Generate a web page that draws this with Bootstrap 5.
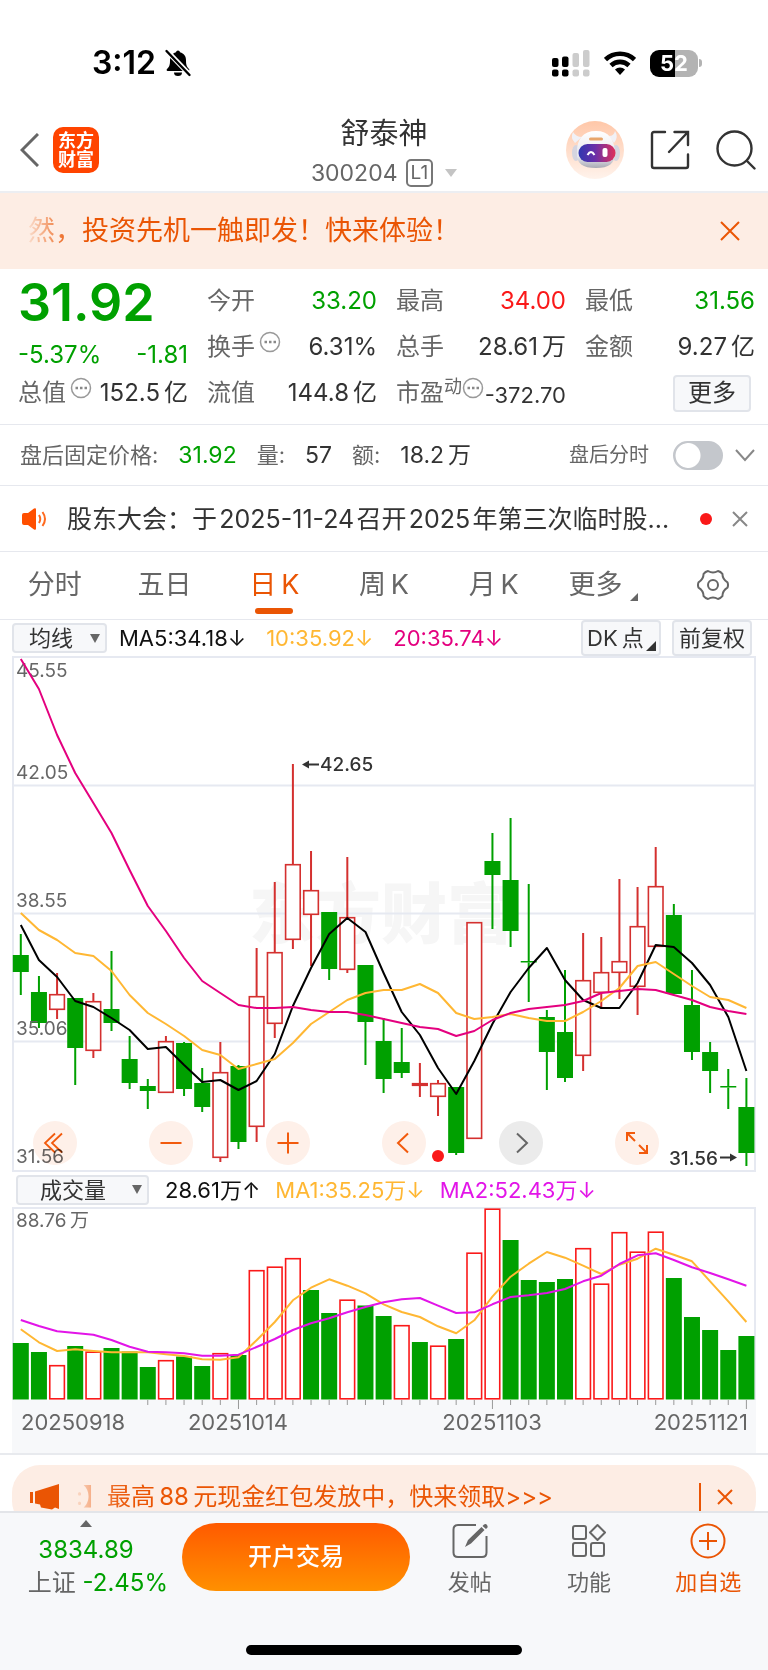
<!DOCTYPE html>
<html lang="zh-CN">
<head>
<meta charset="utf-8">
<meta name="viewport" content="width=device-width, initial-scale=1">
<title>舒泰神 300204</title>
<link rel="stylesheet" href="https://cdn.jsdelivr.net/npm/bootstrap@5.3.0/dist/css/bootstrap.min.css">
<style>
:root{--up:#fa1919;--down:#00a000;--brand:#ea5504;--ink:#333;--soft:#666;--line:#e6e8ee;--panel:#f7f8fa;--peach:#fdede4}
body{font-family:Inter,"Noto Sans CJK SC",sans-serif;color:var(--ink);background:#fff;font-size:24px;line-height:32px}
button{font:inherit;color:inherit;background:none;border:0;padding:0}
svg{display:block}
a{color:inherit;text-decoration:none}
.t-up{color:var(--up)}.t-down{color:var(--down)}.t-soft{color:var(--soft)}.t-brand{color:var(--brand)}
.unit{margin-left:4px}

.statusbar{padding:45px 66px 24px 92px;line-height:36px;color:#000}
.clock{font-size:32px;font-weight:600}
.status-icons{gap:14px}
.batt{width:48px;height:27px;border-radius:9px;background:linear-gradient(90deg,#000 52%,#b3b3b3 52%);color:#fff;font-size:22px;line-height:27px;font-weight:700;text-align:center}
.nub{width:3px;height:8px;border-radius:0 3px 3px 0;background:#b3b3b3;margin-left:1px}

.topbar{display:grid;grid-template-columns:1fr auto 1fr;height:88px;padding:3px 12px 0;border-bottom:2px solid #eceef2}
.lead-l{gap:14px;padding-left:8px}
.tools-r{gap:26px}
.logo{width:46px;height:46px;border-radius:10px;background:#ff4400;color:#fff;font-size:18px;line-height:19px;font-weight:700;text-align:center;padding-top:4px}
.stockname{font-size:29px;line-height:36px;font-weight:400;margin:0}
.namebox{gap:6px;padding-top:4px}
.code{font-size:23px;line-height:30px}
.lvl{border:2px solid #777;border-radius:5px;font-size:19px;line-height:24px;padding:0 3px}
.tri-d{border:6px solid transparent;border-top:8px solid #c4c4c4;border-bottom:0}
.tri-u{border:6px solid transparent;border-bottom:7px solid #666;border-top:0}

.banner{height:76px;background:var(--peach);font-size:27px;color:var(--brand);padding:0 28px}
.fade-l{-webkit-mask-image:linear-gradient(90deg,rgba(0,0,0,.1),rgba(0,0,0,.9) 40px,#000 60px);mask-image:linear-gradient(90deg,rgba(0,0,0,.1),rgba(0,0,0,.9) 40px,#000 60px)}

.quote{display:grid;grid-template-columns:repeat(4,1fr);grid-auto-rows:46px;column-gap:19px;padding:9px 13px 8px 18px;border-bottom:1px solid var(--line)}
.quote>div{display:flex;align-items:center;justify-content:space-between;white-space:nowrap}
.quote>.price{font-size:52px;font-weight:600;padding-top:4px}
.pe{font-size:22px}
.dyn{font-size:18px;line-height:20px;align-self:flex-start}
.btn-box{background:var(--panel);border:2px solid #e1e4ea;border-radius:4px;color:var(--ink)}
.more{width:78px;height:37px;line-height:32px;margin-right:4px}

.after{height:61px;padding:0 13px 0 20px;font-size:23px;border-bottom:1px solid var(--line)}
.after .gap-k{margin-left:20px}
.after .lbl{font-size:22px}
.after .form-switch{padding:0;margin:0;min-height:0;line-height:0}
.after .form-check-input{width:50px;height:29px;margin:0;float:none;border:2px solid #c4c7cc;background-color:#c4c7cc;background-image:radial-gradient(circle at 13px 50%,#fff 12px,transparent 13px);background-size:100% 100%;background-position:0 0}
.lbl-sm{font-size:20px}

.notice{height:66px;padding:0 20px 0 21px;font-size:25px;border-bottom:1px solid var(--line)}
.dot{width:12px;height:12px;border-radius:50%;background:var(--up)}

.periods{display:grid;grid-template-columns:repeat(7,1fr);height:68px;font-size:27px;color:var(--soft);border-bottom:1px solid var(--line);text-align:center}
.periods a,.periods button{position:relative;display:flex;align-items:center;justify-content:center;height:66px}
.periods .active{color:var(--brand)}
.periods .active::after{content:"";position:absolute;bottom:4px;left:50%;width:38px;height:6px;margin-left:-19px;border-radius:3px;background:var(--brand)}
.corner{border:4px solid transparent;border-right-color:currentColor;border-bottom-color:currentColor}

.indbar{font-size:22px;line-height:30px;color:#111;white-space:nowrap;padding:0 16px 0 12px}
.indbar .c-or,.indbar .c-pk{margin-left:20px}
.indbar-vol{height:35px;padding:0 0 0 4px}
.indbar-vol .c-or,.indbar-vol .c-mg{margin-left:15px}
.pick{appearance:none;-webkit-appearance:none;background:var(--panel) url("data:image/svg+xml,%3Csvg xmlns='http://www.w3.org/2000/svg' width='10' height='9'%3E%3Cpath fill='%23666' d='M0 0h10L5 9z'/%3E%3C/svg%3E") no-repeat right 5px center;border:2px solid #e1e4ea;border-radius:4px;font-size:22px;height:30px;line-height:26px;padding:0 0 0 15px;color:var(--ink)}
.pick-ma{width:95px}
.pick-vol{width:133px;padding-left:22px}
.tagbtn{width:80px;height:36px;line-height:32px;position:relative}
.tagbtn+.tagbtn{margin-left:11px}
.tagbtn .corner{position:absolute;right:3px;bottom:3px;border-width:5px}
.c-or{color:#ffb733}.c-pk{color:#e4007f}.c-mg{color:#e215e8}

.plots{padding:0 12px}
.plots svg{width:100%;height:auto}
.plots text{font-size:19px;fill:#666}
.plots .extreme{fill:#333;font-weight:500}
.plots .dates text{font-size:22px}
.plots .wm{font-size:66px;font-weight:900;fill:#f6f6f6}
.tools{position:absolute;left:21px;right:97px;bottom:7px;display:flex;justify-content:space-between;mix-blend-mode:multiply}
.tools button{width:44px;height:44px;border-radius:50%;background:#fef0e9;color:#f25a0c}
.tools .off{background:#ebebeb;color:#666}

.promo{height:58px;border-top:2px solid #e8eaee;padding:10px 12px 0;overflow:hidden}
.pill{height:64px;border-radius:28px;background:var(--peach);color:var(--brand);padding:0 23px 0 18px}
.pill .sep{width:2px;height:29px;background:var(--brand)}

.dock{background:var(--panel);border-top:2px solid #e3e5e9}
.dockrow{display:grid;grid-template-columns:182px 228px 1fr 1fr 1fr;height:84px;padding-top:5px}
.idx{padding:2px 14px 0 4px}
.idx .tri-u{margin-bottom:7px}
.idx .ix-row{line-height:34px}
.trade{height:68px;margin-top:5px;border-radius:34px;background:linear-gradient(#ff5a00,#ff9000);color:#fff;font-weight:500}
.act{display:flex;flex-direction:column;align-items:center;font-size:22px;line-height:30px;color:#666;padding-top:5px}
.act.t-brand{color:var(--brand)}
.act svg{margin-bottom:8px}
.homebar{width:276px;height:10px;border-radius:5px;background:#000;margin:48px auto 15px}
</style>
</head>
<body>

<div class="statusbar d-flex align-items-center">
  <span class="clock">3:12</span>
  <svg class="ms-2" width="28" height="28" viewBox="0 0 28 28"><path fill="#000" d="M14 1.500a2 2 0 0 1 2 1.800c4 1 6 4.200 6 8.200 0 5 1 6.500 3 8.500.6.600.5 2-.7 2H3.700c-1.200 0-1.300-1.400-.7-2 2-2 3-3.500 3-8.500 0-4 2-7.200 6-8.200a2 2 0 0 1 2-1.800zM10 23.500h8a4 3.600 0 0 1-8 0z"/><path stroke="#fff" stroke-width="5" d="M2 1l24 25"/><path stroke="#000" stroke-width="2.400" stroke-linecap="round" d="M2.500 2l23 24"/></svg>
  <div class="ms-auto d-flex align-items-center status-icons">
    <svg width="38" height="28" viewBox="0 0 38 28"><g fill="#000"><rect x="0" y="9" width="6.500" height="9" rx="2"/><rect x="10" y="7.500" width="6.500" height="10.500" rx="2"/><rect x="0" y="20.500" width="6.500" height="7" rx="2"/><rect x="10" y="20.500" width="6.500" height="7" rx="2"/></g><g fill="#ccc"><rect x="20.500" y="4" width="6.500" height="14" rx="2"/><rect x="31" y="1" width="6.500" height="17" rx="2"/><rect x="20.500" y="20.500" width="6.500" height="7" rx="2"/><rect x="31" y="20.500" width="6.500" height="7" rx="2"/></g></svg>
    <svg width="32" height="26" viewBox="0 0 32 26"><g fill="none" stroke="#000" stroke-width="4.600"><path d="M1.500 9.500a21 21 0 0 1 29 0"/><path d="M7 15.500a13 13 0 0 1 18 0"/></g><path fill="#000" d="M16 25l-5-5.500a7.500 7.500 0 0 1 10 0z"/></svg>
    <div class="d-flex align-items-center"><div class="batt">52</div><div class="nub"></div></div>
  </div>
</div>

<header class="topbar">
  <div class="lead-l d-flex align-items-center">
    <button type="button" aria-label="返回"><svg width="19" height="34" viewBox="0 0 19 34" fill="none" stroke="#666" stroke-width="3"><path d="M18 1L2 17l16 16"/></svg></button>
    <a href="#" class="logo">东方<br>财富</a>
  </div>
  <div class="namebox d-flex flex-column align-items-center justify-content-center">
    <h1 class="stockname">舒泰神</h1>
    <div class="code t-soft d-flex align-items-center gap-2"><span>300204</span><span class="lvl">L1</span><span class="tri-d ms-1"></span></div>
  </div>
  <div class="tools-r d-flex align-items-center justify-content-end">
    <button type="button" aria-label="智能助手"><svg width="58" height="58" viewBox="0 0 58 58"><defs><linearGradient id="halo" x2="0" y2="1"><stop stop-color="#ffc7a8"/><stop offset="1" stop-color="#fff3ec"/></linearGradient><linearGradient id="visor"><stop stop-color="#3038b0"/><stop offset=".45" stop-color="#6a2fa8"/><stop offset="1" stop-color="#e0305a"/></linearGradient><linearGradient id="shell" x2="0" y2="1"><stop stop-color="#fff"/><stop offset=".7" stop-color="#e6e6ec"/><stop offset="1" stop-color="#a9a9b4"/></linearGradient></defs><circle cx="29" cy="29" r="29" fill="url(#halo)"/><path d="M9 22q-5-5-2-11 3 5 9 5zM43 15q5 0 6-5 4 6-1 12z" fill="#f1f1f6"/><ellipse cx="10" cy="32" rx="4" ry="8" fill="#d5d5e0"/><ellipse cx="50" cy="32" rx="4" ry="8" fill="#d5d5e0"/><path d="M30 10c13 0 18 8 19 21 0 12-6 16-19 16s-20-4-19-16c0-13 6-21 19-21z" fill="url(#shell)"/><rect x="23" y="16.500" width="14" height="3" rx="1.500" fill="#e8a56a"/><rect x="12.500" y="23" width="37" height="18" rx="9" fill="url(#visor)"/><path d="M21.500 34q3.500-6 7 0" fill="none" stroke="#fff" stroke-width="2"/><rect x="36.500" y="27" width="5" height="9" rx="2" fill="#fff"/></svg></button>
    <button type="button" aria-label="分享"><svg width="40" height="40" viewBox="0 0 40 40" fill="none" stroke="#333" stroke-width="2.400" stroke-linecap="round"><path d="M15 2H4Q2 2 2 4v32q0 2 2 2h32q2 0 2-2V24.500M24.500 2H38v13M37.500 2.500L19 22"/></svg></button>
    <button type="button" aria-label="搜索"><svg width="40" height="40" viewBox="0 0 40 40" fill="none" stroke="#333" stroke-width="2.400" stroke-linecap="round"><circle cx="18.500" cy="18.500" r="17"/><path d="M31 31l7.500 7.500"/></svg></button>
  </div>
</header>

<div class="banner d-flex align-items-center justify-content-between">
  <span class="fade-l text-nowrap">然，投资先机一触即发！快来体验！</span>
  <button type="button" aria-label="关闭"><svg width="20" height="20" viewBox="0 0 20 20" stroke="#ea5504" stroke-width="2"><path d="M1 1l18 18M19 1L1 19"/></svg></button>
</div>

<section class="quote">
  <div class="price t-down">31.92</div>
  <div><span class="t-soft">今开</span><span class="t-down">33.20</span></div>
  <div><span class="t-soft">最高</span><span class="t-up">34.00</span></div>
  <div><span class="t-soft">最低</span><span class="t-down">31.56</span></div>

  <div class="t-down pt-3"><span>-5.37%</span><span>-1.81</span></div>
  <div><span class="t-soft d-flex">换手<svg class="ms-1" width="22" height="22" viewBox="0 0 22 22"><circle cx="11" cy="11" r="9.500" fill="none" stroke="#999" stroke-width="1.500"/><path stroke="#888" stroke-width="2.500" stroke-dasharray="2.500 2" d="M5.500 11h12"/></svg></span><span>6.31%</span></div>
  <div><span class="t-soft">总手</span><span>28.61<span class="unit">万</span></span></div>
  <div><span class="t-soft">金额</span><span>9.27<span class="unit">亿</span></span></div>

  <div><span class="t-soft d-flex">总值<svg class="ms-1" width="22" height="22" viewBox="0 0 22 22"><circle cx="11" cy="11" r="9.500" fill="none" stroke="#999" stroke-width="1.500"/><path stroke="#888" stroke-width="2.500" stroke-dasharray="2.500 2" d="M5.500 11h12"/></svg></span><span>152.5<span class="unit">亿</span></span></div>
  <div><span class="t-soft">流值</span><span>144.8<span class="unit">亿</span></span></div>
  <div><span class="t-soft d-flex">市盈<span class="dyn">动</span><svg width="22" height="22" viewBox="0 0 22 22"><circle cx="11" cy="11" r="9.500" fill="none" stroke="#999" stroke-width="1.500"/><path stroke="#888" stroke-width="2.500" stroke-dasharray="2.500 2" d="M5.500 11h12"/></svg></span><span class="pe pt-1">-372.70</span></div>
  <div class="justify-content-end"><button type="button" class="btn-box more">更多</button></div>
</section>

<section class="after d-flex align-items-center">
  <span class="t-soft lbl">盘后固定价格:</span><span class="t-down gap-k">31.92</span>
  <span class="t-soft lbl gap-k">量:</span><span class="gap-k">57</span>
  <span class="t-soft lbl gap-k">额:</span><span class="gap-k">18.2<span class="unit">万</span></span>
  <label class="lbl-sm t-soft ms-auto me-4" for="ahSwitch">盘后分时</label>
  <div class="form-check form-switch"><input class="form-check-input" type="checkbox" role="switch" id="ahSwitch"></div>
  <button type="button" aria-label="展开" class="ms-2 ps-1"><svg width="20" height="13" viewBox="0 0 20 13" fill="none" stroke="#888" stroke-width="2"><path d="M1 1l9 10 9-10"/></svg></button>
</section>

<section class="notice d-flex align-items-center">
  <svg class="flex-shrink-0" width="26" height="22" viewBox="0 0 26 22"><path fill="#ff4f00" d="M1 7q0-2 2-2h4l6-4.500q2-1 2 1v19q0 2-2 1L7 17H3q-2 0-2-2z"/><path d="M18 7q2.500 4 0 8M21.500 4q5 7 0 14" fill="none" stroke="#ff6a1f" stroke-width="2"/></svg>
  <a href="#" class="text-nowrap ms-3 ps-1">股东大会：于&hairsp;2025-11-24&hairsp;召开&hairsp;2025&hairsp;年第三次临时股...</a>
  <span class="dot flex-shrink-0 ms-auto me-3"></span>
  <button type="button" aria-label="关闭" class="ms-1"><svg width="16" height="16" viewBox="0 0 16 16" stroke="#888" stroke-width="2"><path d="M1 1l14 14M15 1L1 15"/></svg></button>
</section>

<nav class="periods">
  <a href="#">分时</a><a href="#">五日</a><a href="#" class="active">日&thinsp;K</a><a href="#">周&thinsp;K</a><a href="#">月&thinsp;K</a>
  <button type="button">更多<span class="corner ms-2 mt-4"></span></button>
  <button type="button" aria-label="设置"><svg width="32" height="32" viewBox="0 0 32 32" fill="none" stroke="#666" stroke-width="2"><path stroke-linejoin="round" d="M30.500 13.400Q31.500 16 30.500 18.600Q25.500 21.500 25.400 27.200Q23.600 29.400 21 30Q16 27 11 30Q8.400 29.400 6.600 27.200Q6.500 21.500 1.500 18.600Q.5 16 1.500 13.400Q6.500 10.500 6.600 4.800Q8.400 2.600 11 2Q16 5 21 2Q23.600 2.600 25.400 4.800Q25.500 10.500 30.500 13.400z"/><circle cx="16" cy="16" r="5"/></svg></button>
</nav>

<div class="indbar d-flex align-items-center">
  <select class="pick pick-ma" aria-label="主图指标"><option>均线</option></select>
  <span class="ms-2 ps-1">MA5:34.18↓</span><span class="c-or">10:35.92↓</span><span class="c-pk">20:35.74↓</span>
  <button type="button" class="btn-box tagbtn ms-auto text-start ps-1">DK&thinsp;点<span class="corner"></span></button>
  <button type="button" class="btn-box tagbtn">前复权</button>
</div>

<main class="plots">
  <div class="position-relative">
    <svg id="kline" viewBox="12 656 744 516" role="img" aria-label="日K线图">
      <text class="wm" x="249" y="938">东方财富</text>
      <g fill="none" stroke="#e6e9f1" stroke-width="2"><path d="M12 785.500H756M12 913.500H756M12 1041.500H756"/><rect x="13" y="657" width="742" height="514"/></g>
      <g id="candles"></g>
      <g><text x="16" y="677">45.55</text><text x="16" y="779">42.05</text><text x="16" y="907">38.55</text><text x="16" y="1035">35.06</text><text x="16" y="1163">31.56</text></g>
      <g id="averages" fill="none" stroke-width="2" stroke-linejoin="round"></g>
      <g stroke="#333" stroke-width="2"><path d="M306 764.500h13M720 1157.500h13"/><path fill="#333" stroke="none" d="M302 764.500l7-4v8zM737 1157.500l-7-4v8z"/></g>
      <text class="extreme" x="320" y="771">42.65</text><text class="extreme" x="718" y="1165" text-anchor="end">31.56</text>
      <circle cx="438" cy="1156" r="6" fill="#fa1919"/>
    </svg>
    <div class="tools">
      <button type="button" aria-label="最早"><svg width="44" height="44" viewBox="0 0 44 44" fill="none" stroke="currentColor" stroke-width="1.800"><path d="M22 12.500L12 22l10 9.500M29 12.500L19 22l10 9.500"/></svg></button>
      <button type="button" aria-label="缩小"><svg width="44" height="44" viewBox="0 0 44 44" stroke="currentColor" stroke-width="2"><path d="M11.500 22h21"/></svg></button>
      <button type="button" aria-label="放大"><svg width="44" height="44" viewBox="0 0 44 44" stroke="currentColor" stroke-width="2"><path d="M11.500 22h21M22 11.500v21"/></svg></button>
      <button type="button" aria-label="左移"><svg width="44" height="44" viewBox="0 0 44 44" fill="none" stroke="currentColor" stroke-width="2"><path d="M26 12.500L16 22l10 9.500"/></svg></button>
      <button type="button" aria-label="右移" class="off"><svg width="44" height="44" viewBox="0 0 44 44" fill="none" stroke="currentColor" stroke-width="2"><path d="M18 12.500L28 22l-10 9.500"/></svg></button>
      <button type="button" aria-label="全屏"><svg width="44" height="44" viewBox="0 0 44 44" fill="none" stroke="currentColor" stroke-width="2"><path d="M12 20v-8h8M12 12l8 8M32 24v8h-8M32 32l-8-8"/></svg></button>
    </div>
  </div>

  <div class="indbar indbar-vol d-flex align-items-center">
    <select class="pick pick-vol" aria-label="副图指标"><option>成交量</option></select>
    <span class="ms-3">28.61万↑</span><span class="c-or">MA1:35.25万↓</span><span class="c-mg">MA2:52.43万↓</span>
  </div>

  <svg id="volume" viewBox="12 1207 744 246" role="img" aria-label="成交量图">
    <rect x="12" y="1400" width="744" height="53" fill="#f7f8fa"/>
    <path d="M13 1400V1208H755V1400" fill="none" stroke="#e6e9f1" stroke-width="2"/>
    <g id="volbars"></g>
    <text x="16" y="1227">88.76&#8201;万</text>
    <g id="volavg" fill="none" stroke-width="2" stroke-linejoin="round"></g>
    <path id="ticks" stroke="#999" stroke-width="1" fill="none"/>
    <g class="dates"><text x="21" y="1430">20250918</text><text x="238" y="1430" text-anchor="middle">20251014</text><text x="492" y="1430" text-anchor="middle">20251103</text><text x="748" y="1430" text-anchor="end">20251121</text></g>
  </svg>
</main>

<aside class="promo">
  <div class="pill d-flex align-items-center">
    <svg class="flex-shrink-0" width="30" height="26" viewBox="0 0 30 26" fill="#ea5504"><path d="M0 8h3v11H0zM5 7.500L29 0v25l-4-1.500-3 2-11-2-1-3-5-1z"/></svg>
    <span class="fade-l text-nowrap ms-3">:】最高&thinsp;88&thinsp;元现金红包发放中，快来领取&gt;&gt;&gt;</span>
    <span class="sep ms-auto me-3"></span>
    <button type="button" aria-label="关闭"><svg width="16" height="16" viewBox="0 0 16 16" stroke="#ea5504" stroke-width="2"><path d="M1 1l14 14M15 1L1 15"/></svg></button>
  </div>
</aside>

<footer class="dock">
  <div class="dockrow">
    <a href="#" class="idx d-flex flex-column align-items-center">
      <span class="tri-u"></span>
      <span class="t-down">3834.89</span>
      <span class="t-soft text-nowrap align-self-end ix-row">上证 <span class="t-down">-2.45%</span></span>
    </a>
    <button type="button" class="trade">开户交易</button>
    <a href="#" class="act"><svg width="36" height="36" viewBox="0 0 36 36" fill="none" stroke="#666" stroke-width="2"><path d="M24 2H6Q1.500 2 1.500 6.500v23Q1.500 34 6 34h24q4.500 0 4.500-4.500V13"/><path fill="#666" stroke="none" d="M13 24l3-7L29.500 4l3 3L19 20.500zM30.500 3l1.500-1.500q2-1 3 .5t.5 2.500L34 6z"/></svg>发帖</a>
    <a href="#" class="act"><svg width="36" height="36" viewBox="0 0 36 36" fill="none" stroke="#666" stroke-width="2"><rect x="2" y="3" width="13" height="13" rx="2"/><rect x="2" y="20" width="13" height="13" rx="2"/><rect x="20" y="20" width="13" height="13" rx="2"/><path stroke-linejoin="round" d="M26.500 2L34 9.500 26.500 17 19 9.500z"/></svg>功能</a>
    <a href="#" class="act t-brand"><svg width="36" height="36" viewBox="0 0 36 36" fill="none" stroke="#ea5504" stroke-width="2"><circle cx="18" cy="18" r="16.500"/><path d="M9 18h18M18 9v18"/></svg>加自选</a>
  </div>
  <div class="d-flex"><div class="homebar"></div></div>
</footer>

<script>
// One row per trading day: direction, high, open/close top, open/close bottom, low, volume top (plot units)
const days = [
['g',934,955,972,995,1343],['g',976,992,1023,1028,1352],['r',973,994,1010,1019,1365],['g',998,998,1048,1085,1346],
['r',993,1001,1051,1058,1351.500],['g',951,1009,1023,1031,1348],['g',1036,1059,1083,1089,1351.500],['g',1079,1086,1091,1109,1367],
['r',1036,1041,1093,1093,1360],['g',1042,1043,1089,1096,1356.500],['g',1068,1083,1107,1112,1366],['r',1042,1072,1158,1162,1353],
['g',1065,1066,1142,1149,1355],['r',948,996,1127,1142,1270],['r',882,952,1024,1038,1266.500],['r',764,864,940,949,1258],
['r',851,890,915,966,1290,'g'],['g',912,912,969,980,1313],['r',857,917,970,973,1299.500],['g',965,965,1022,1065,1305.500],
['g',1018,1041,1079,1093,1316],['g',1028,1062,1073,1078,1325,'r'],['r',1063,1083,1086,1097,1342,'g'],['r',1080,1083,1097,1116,1345.500],
['g',1087,1087,1153,1155,1339],['r',922,922,1139,1139,1252.500],['g',833,861,875,929,1208.500,'r'],['g',818,880,931,947,1240],
['g',884,961,962.500,1002,1280],['g',1010,1017,1052,1090,1282],['g',970,1032,1078,1082,1279],['r',933,980,1056,1071,1248],
['r',937,972,993,1009,1283.500],['r',879,961,973,999,1232],['r',887,926,987,1015,1251.500],['r',847,886,947,947,1231.500],
['g',904,915,994,994,1278],['g',970,1005,1052,1060,1317],['g',1042,1052,1071,1093,1330],['g',1069,1086,1087.500,1109,1350],['g',1078,1107,1153,1166,1336]];
const ma = {
 '#000':[925,960,977,1001,1007,1018,1030,1049,1047,1065,1082,1080,1090,1081,1054,1006,968,934,918,932,973,1012,1035,1068,1094,1061,1024,992,968,948,980,1000,1008,1008,983,945,947,963,985,1017,1071],
 '#ffb733':[913,930,940,953,956,971,995,1013,1024,1036,1050,1055,1069,1064,1059,1043,1024,1012,1000,993,990,990,984,993,1013,1019,1017,1014,1018,1021,1021,1012,1001,988,966,962,974,986,997,1000,1008],
 '#e4007f':[659,689,735,773,803,833,870,906,931,958,981,993,1005,1008,1008,1007,1010,1012,1012,1015,1019,1023,1027,1029,1036,1031,1020,1013,1009,1007,1005,1001,993,991,989,990,995,1000,1007,1011,1014]};
const va = {
 '#ffb733':[478,517,543,538,543,547,547,547,553,558,568,569,562,511,456,391,353,328,347,370,403,426,441,469,490,451,380,320,281,246,263,287,312,284,266,236,254,274,334,394,456],
 '#e215e8':[450,468,484,489,494,510,530,545,547,550,557,557,554,531,507,480,460,445,427,411,397,388,384,407,429,427,403,381,376,369,357,334,317,282,256,250,270,292,309,328,347]};
const X = i => 20.800 + i * 18.140;
const line = (ys, c) => `<polyline stroke="${c}" points="${ys.map((y, i) => X(i).toFixed(1) + ',' + y.toFixed(1)).join(' ')}"/>`;
const G = '#00a000', R = '#d4302f', V = '#fa1919', BASE = 1399.500;
let k = '', v = '', t = '';
days.forEach(([d, hi, top, bot, lo, vol, vd], i) => {
  const x = X(i), c = d === 'g' ? G : R;
  k += `<path stroke="${c}" stroke-width="2" d="M${x} ${hi}V${top}M${x} ${bot}V${lo}"/>`;
  k += d === 'g' ? `<rect x="${x - 8}" y="${top}" width="16" height="${bot - top}" fill="${G}"/>`
                 : `<rect x="${x - 7.300}" y="${top + .700}" width="14.600" height="${bot - top - 1.400}" fill="#fff" stroke="${R}" stroke-width="1.600"/>`;
  v += (vd || d) === 'g' ? `<rect x="${x - 8}" y="${vol}" width="16" height="${BASE - vol}" fill="${G}"/>`
                 : `<rect x="${x - 7.300}" y="${vol + .700}" width="14.600" height="${BASE - vol - 1.400}" fill="#fff" stroke="${V}" stroke-width="1.600"/>`;
  if (i > 6) t += `M${x} 1400v${(i - 12) % 14 ? 5 : 9}`;
});
document.getElementById('candles').innerHTML = k;
document.getElementById('volbars').innerHTML = v;
document.getElementById('ticks').setAttribute('d', t);
document.getElementById('averages').innerHTML = Object.entries(ma).map(([c, ys]) => line(ys, c)).join('');
document.getElementById('volavg').innerHTML = Object.entries(va).map(([c, ys]) => line(ys.map(p => 1170 + p / 3), c)).join('');
</script>
<script src="https://cdn.jsdelivr.net/npm/bootstrap@5.3.0/dist/js/bootstrap.bundle.min.js"></script>
</body>
</html>
